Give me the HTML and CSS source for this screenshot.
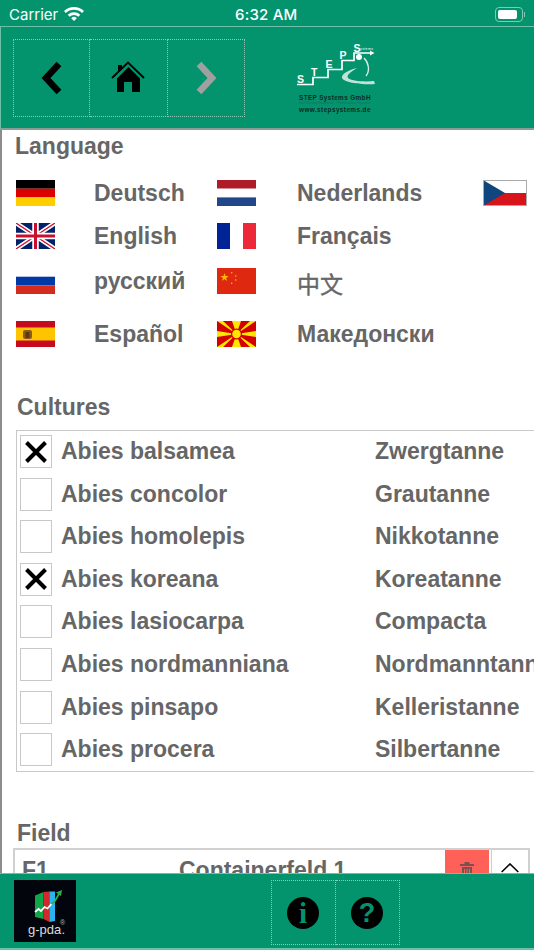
FILE: index.html
```html
<!DOCTYPE html>
<html lang="en">
<head>
    <meta charset="UTF-8">
    <meta name="viewport" content="width=device-width, initial-scale=1.0">
    <title>g-pda Settings</title>
    <link rel="stylesheet" href="styles.css">
</head>
<body>
    <div class="status-bar">
        <div class="status-left">
            <span>Carrier</span>
            <svg class="wifi" width="20" height="15" viewBox="0 0 20 15">
                <path d="M0 5a14.500 14.500 0 0 1 20 0l-1.900 2a11.700 11.700 0 0 0-16.200 0z" fill="#fff"/>
                <path d="M3.700 8.700a9.200 9.200 0 0 1 12.600 0l-2 2a6.300 6.300 0 0 0-8.600 0z" fill="#fff"/>
                <path d="M7.200 12.200a4 4 0 0 1 5.600 0L10 15z" fill="#fff"/>
            </svg>
        </div>
        <div class="status-time">6:32 AM</div>
        <div class="status-right">
            <div class="battery"><div class="battery-fill"></div></div>
            <div class="battery-cap"></div>
        </div>
    </div>

    <header class="top-bar">
        <nav class="nav-group">
            <button class="nav-btn">
                <svg width="24" height="36" viewBox="0 0 24 36"><path d="M19 4L6 18l13 14" fill="none" stroke="#000" stroke-width="6.500"/></svg>
            </button>
            <button class="nav-btn">
                <svg width="34" height="34" viewBox="0 0 34 34">
                    <path d="M1 17L17 1.500 33 17" fill="none" stroke="#000" stroke-width="1.800"/>
                    <path d="M7 4h4v3l-4 4z" fill="#000"/>
                    <path d="M17.500 6L29 17.500V31H21V21h-8v10H6V17.500z" fill="#000"/>
                </svg>
            </button>
            <button class="nav-btn">
                <svg width="24" height="36" viewBox="0 0 24 36"><path d="M5 4l13 14L5 32" fill="none" stroke="#a0a0a0" stroke-width="6.500"/></svg>
            </button>
        </nav>
        <svg class="step-logo" width="84" height="72" viewBox="0 0 84 72">
            <path d="M2 41.500H18V34.500H33V26.500H47V17.500H59V10H78" fill="none" stroke="#fff" stroke-width="1.700"/>
            <path d="M75 7.500l4.500 2.500-4.500 2.500z" fill="#fff"/>
            <text x="2" y="40" class="step-letter">S</text>
            <text x="16" y="33" class="step-letter">T</text>
            <text x="30.500" y="25" class="step-letter">E</text>
            <text x="44.500" y="16" class="step-letter">P</text>
            <text x="58.500" y="8.500" class="step-letter">S</text>
            <text x="65" y="7" class="step-small" textLength="13">ystems</text>
            <circle cx="64" cy="14" r="3" fill="#fff"/>
            <path d="M69 15c5 5 6 13 2 18" fill="none" stroke="#d8efe7" stroke-width="1.300"/>
            <path d="M62 25c-8 2-16 6-15 10 2 5 22 7 33 6l-1-3c-10 1-23 0-26-3-2-3 4-7 9-10z" fill="#bfe3d6"/>
            <text x="4" y="57" class="step-name" textLength="71.500">STEP Systems GmbH</text>
            <text x="4" y="61" class="step-tiny" textLength="71.500">Soil Testing Equipment · Professional Systems</text>
            <text x="4" y="68.500" class="step-name" textLength="71.500">www.stepsystems.de</text>
        </svg>
    </header>

    <main class="content">
        <h2 class="section-title lang-title">Language</h2>
        <div class="lang-grid">
            <svg class="flag" viewBox="0 0 39 26"><rect width="39" height="8.700" fill="#000"/><rect y="8.700" width="39" height="8.700" fill="#dd0000"/><rect y="17.400" width="39" height="8.600" fill="#ffce00"/></svg>
            <span class="lang-name">Deutsch</span>
            <svg class="flag" viewBox="0 0 39 26"><rect width="39" height="8.700" fill="#ae1c28"/><rect y="8.700" width="39" height="8.700" fill="#fff"/><rect y="17.400" width="39" height="8.600" fill="#21468b"/></svg>
            <span class="lang-name">Nederlands</span>
            <svg class="flag flag-cz" viewBox="0 0 44 26"><rect width="44" height="13" fill="#fff"/><rect y="13" width="44" height="13" fill="#d7141a"/><path d="M0 0l22 13L0 26z" fill="#11457e"/><rect x=".5" y=".5" width="43" height="25" fill="none" stroke="#aaa"/></svg>

            <svg class="flag" viewBox="0 0 39 26"><rect width="39" height="26" fill="#012169"/><path d="M0 0l39 26M39 0L0 26" stroke="#fff" stroke-width="4.500"/><path d="M0 0l39 26M39 0L0 26" stroke="#c8102e" stroke-width="1.300"/><path d="M19.500 0v26M0 13h39" stroke="#fff" stroke-width="6.500"/><path d="M19.500 0v26M0 13h39" stroke="#c8102e" stroke-width="3"/></svg>
            <span class="lang-name">English</span>
            <svg class="flag" viewBox="0 0 39 26"><rect width="13" height="26" fill="#002395"/><rect x="13" width="13" height="26" fill="#fff"/><rect x="26" width="13" height="26" fill="#ed2939"/></svg>
            <span class="lang-name">Français</span>
            <span></span>

            <svg class="flag" viewBox="0 0 39 26"><rect width="39" height="8.700" fill="#fff"/><rect y="8.700" width="39" height="8.700" fill="#0039a6"/><rect y="17.400" width="39" height="8.600" fill="#d52b1e"/></svg>
            <span class="lang-name">русский</span>
            <svg class="flag" viewBox="0 0 39 26"><rect width="39" height="26" fill="#de2910"/><path d="M7.500 5l1 3h3.200l-2.600 1.900 1 3-2.600-1.900-2.600 1.900 1-3L3.300 8h3.200z" fill="#ffb800"/><circle cx="14.700" cy="4.700" r=".8" fill="#ffb800"/><circle cx="18.700" cy="8" r=".8" fill="#ffb800"/><circle cx="18.700" cy="12" r=".8" fill="#ffb800"/><circle cx="14.700" cy="15.300" r=".8" fill="#ffb800"/></svg>
            <span class="lang-name lang-cjk">中文</span>
            <span></span>

            <svg class="flag" viewBox="0 0 39 26"><rect width="39" height="26" fill="#c60b1e"/><rect y="6.500" width="39" height="13" fill="#ffc400"/><rect x="7" y="9" width="9" height="9" rx="2" fill="#8f5a1e"/><rect x="9.500" y="11" width="4" height="6" fill="#5a3a10"/></svg>
            <span class="lang-name">Español</span>
            <svg class="flag" viewBox="0 0 39 26"><rect width="39" height="26" fill="#d20000"/><path d="M0 0h6l13.500 13zM33 0h6L19.500 13zM0 26h6l13.500-13zM33 26h6L19.500 13zM15 0h9l-4.500 13zM15 26h9l-4.500-13zM0 10v6l19.500-3zM39 10v6l-19.500-3z" fill="#ffe600"/><circle cx="19.500" cy="13" r="5.500" fill="#d20000"/><circle cx="19.500" cy="13" r="4.300" fill="#ffe600"/></svg>
            <span class="lang-name">Македонски</span>
            <span></span>
        </div>

        <h2 class="section-title cult-title">Cultures</h2>
        <div class="culture-box">
            <div class="culture-row"><div class="check"><svg width="24" height="24" viewBox="0 0 24 24"><path d="M2.500 2.500l19 19M21.500 2.500l-19 19" stroke="#000" stroke-width="4"/></svg></div><span class="latin">Abies balsamea</span><span class="common">Zwergtanne</span></div>
            <div class="culture-row"><div class="check"></div><span class="latin">Abies concolor</span><span class="common">Grautanne</span></div>
            <div class="culture-row"><div class="check"></div><span class="latin">Abies homolepis</span><span class="common">Nikkotanne</span></div>
            <div class="culture-row"><div class="check"><svg width="24" height="24" viewBox="0 0 24 24"><path d="M2.500 2.500l19 19M21.500 2.500l-19 19" stroke="#000" stroke-width="4"/></svg></div><span class="latin">Abies koreana</span><span class="common">Koreatanne</span></div>
            <div class="culture-row"><div class="check"></div><span class="latin">Abies lasiocarpa</span><span class="common">Compacta</span></div>
            <div class="culture-row"><div class="check"></div><span class="latin">Abies nordmanniana</span><span class="common">Nordmanntanne</span></div>
            <div class="culture-row"><div class="check"></div><span class="latin">Abies pinsapo</span><span class="common">Kelleristanne</span></div>
            <div class="culture-row"><div class="check"></div><span class="latin">Abies procera</span><span class="common">Silbertanne</span></div>
        </div>

        <h2 class="section-title field-title">Field</h2>
        <div class="field-row">
            <span class="field-id">F1</span>
            <span class="field-name">Containerfeld 1</span>
            <div class="field-delete">
                <svg width="14" height="16" viewBox="0 0 14 16" fill="#7a5050"><rect x="4.500" y="0" width="5" height="2"/><rect x="0" y="2" width="14" height="2"/><path d="M2 5h10v11H2zM4 7v7h1V7zm2.500 0v7h1V7zM9 7v7h1V7z" fill-rule="evenodd"/></svg>
            </div>
            <div class="field-toggle">
                <svg width="18" height="10" viewBox="0 0 18 10"><path d="M.7 9L9 1l8.300 8" fill="none" stroke="#000" stroke-width="1.600"/></svg>
            </div>
        </div>
    </main>

    <footer class="bottom-bar">
        <svg class="gpda-logo" width="62" height="62" viewBox="0 0 62 62">
            <rect width="62" height="62" fill="#02060c"/>
            <path d="M21 15.500l8.600-3.500v27l-8.600-2z" fill="#0fa548"/>
            <path d="M29.600 12l5.800-.5V42l-5.800-3z" fill="#d22a2c"/>
            <path d="M35.400 11.500H41V41l-5.600 1z" fill="#29b6f0"/>
            <path d="M21 32l3.500-3 2.500 2 3.500-4 3 1.500 4-4.500" fill="none" stroke="#fff" stroke-width="1.800"/>
            <path d="M37.500 24l3.500-3 4-7" fill="none" stroke="#31b04a" stroke-width="1.800"/>
            <path d="M48 10l-6 2.500 5 3.500z" fill="#31b04a"/>
            <text x="14" y="54" class="gpda-text" textLength="37">g-pda.</text>
            <text x="46" y="45" class="gpda-mark">®</text>
        </svg>
        <div class="help-group">
            <button class="help-btn">
                <svg width="32" height="32" viewBox="0 0 32 32"><circle cx="16" cy="16" r="16" fill="#000"/><text x="16" y="26" class="icon-i">i</text></svg>
            </button>
            <button class="help-btn">
                <svg width="32" height="32" viewBox="0 0 32 32"><circle cx="16" cy="16" r="16" fill="#000"/><text x="16" y="25" class="icon-q">?</text></svg>
            </button>
        </div>
    </footer>
</body>
</html>
```

FILE: styles.css
```css
* { box-sizing: border-box; }
html, body { margin: 0; padding: 0; }
body { width: 534px; height: 950px; overflow: hidden; display: flex; flex-direction: column; background: #fff; font-family: "Liberation Sans", Arial, sans-serif; }

.status-bar { height: 26px; flex: none; background: #03946e; color: #fff; display: flex; align-items: center; justify-content: space-between; padding: 2px 9px 0 9px; position: relative; font-family: Inter, sans-serif; font-size: 15px; }
.status-left { display: flex; align-items: center; gap: 6px; }
.wifi { margin-top: -2px; }
.status-time { position: absolute; left: 235px; top: 5px; font-weight: 500; letter-spacing: .2px; }
.status-right { display: flex; align-items: center; gap: 1px; }
.battery { width: 28px; height: 15px; border: 1px solid #7fcab5; border-radius: 4px; padding: 2px; }
.battery-fill { width: 85%; height: 100%; background: #fff; border-radius: 2px; }
.battery-cap { width: 1px; height: 5px; background: #7fcab5; }

.top-bar { height: 104px; flex: none; background: #03946e; border-top: 1px solid #6fc0a9; border-left: 1px solid #6fc0a9; border-bottom: 2px solid #8a9c96; display: flex; padding: 12px 0 0 12px; }
.nav-group { display: flex; height: 78px; }
.nav-btn { width: 77.300px; height: 78px; padding: 0; background: none; border: 1px dotted #8fcab5; display: flex; align-items: center; justify-content: center; }
.nav-btn + .nav-btn { border-left: 0; }
.step-logo { margin: 4px 0 0 50px; }
.step-letter { font: bold 10.500px "Liberation Sans", sans-serif; fill: #fff; }
.step-small { font: 3.500px "Liberation Sans", sans-serif; fill: #fff; }
.step-name { font: bold 6.400px "Liberation Sans", sans-serif; fill: #0d2b25; }
.step-tiny { font: 3px "Liberation Sans", sans-serif; fill: #1d6a55; }

.content { flex: 1; min-height: 0; overflow: hidden; border-left: 2px solid #8c8c8c; }
.section-title { margin: 0; font-size: 23px; line-height: 26px; font-weight: bold; color: #666; }
.lang-title { padding: 3px 0 0 13px; }
.lang-grid { display: grid; grid-template-columns: 78px 123px 80px 186px 44px; grid-template-rows: 43px 45px 53px 26px; padding: 21px 0 0 14px; align-items: start; }
.flag { width: 39px; height: 26px; display: block; }
.flag-cz { width: 44px; }
.lang-name { font-size: 23px; line-height: 26px; font-weight: bold; color: #666; }
.lang-cjk { font-family: "Noto Sans CJK SC", sans-serif; font-weight: 400; line-height: 30px; -webkit-text-stroke: .4px #666; }

.cult-title { padding: 47px 0 0 15px; }
.culture-box { margin: 10px 0 0 14px; width: 530px; height: 342px; border: 1px solid #c8c8c8; border-right: 0; padding-top: 4px; overflow: hidden; }
.culture-row { height: 42.600px; display: flex; align-items: flex-start; padding-left: 3px; font-size: 23px; line-height: 32px; font-weight: bold; color: #666; white-space: nowrap; }
.check { width: 32px; height: 33px; flex: none; border: 1px solid #c8c8c8; display: flex; align-items: center; justify-content: center; }
.latin { width: 314px; margin-left: 9px; flex: none; }
.common { flex: none; }

.field-title { padding: 48px 0 0 15px; }
.field-row { margin: 2px 0 0 11px; width: 517px; height: 60px; border: 2px solid #d0d0d0; display: flex; font-size: 23px; font-weight: bold; color: #666; }
.field-id { width: 164px; padding: 7px 0 0 7px; }
.field-name { width: 266px; padding-top: 7px; }
.field-delete { width: 44px; background: #ff6058; display: flex; justify-content: center; padding-top: 12px; }
.field-toggle { flex: 1; margin-left: 2px; border-left: 1px solid #d0d0d0; display: flex; justify-content: center; padding-top: 13px; }

.bottom-bar { height: 77px; flex: none; background: #03946e; border-top: 1px solid #6fc0a9; border-bottom: 2px solid #6fc0a9; display: flex; padding: 6px 0 0 14px; }
.gpda-logo { flex: none; }
.gpda-text { font: 13px "Liberation Sans", sans-serif; fill: #ddd; }
.gpda-mark { font: 7px "Liberation Sans", sans-serif; fill: #bbb; }
.help-group { display: flex; margin-left: 195px; height: 65px; }
.help-btn { width: 64.500px; height: 65px; padding: 0; background: none; border: 1px dotted #8fcab5; display: flex; align-items: center; justify-content: center; }
.help-btn + .help-btn { border-left: 0; }
.icon-i { font: bold 29px "Liberation Serif", serif; fill: #03946e; text-anchor: middle; }
.icon-q { font: bold 27px "Liberation Sans", sans-serif; fill: #03946e; text-anchor: middle; }
```
